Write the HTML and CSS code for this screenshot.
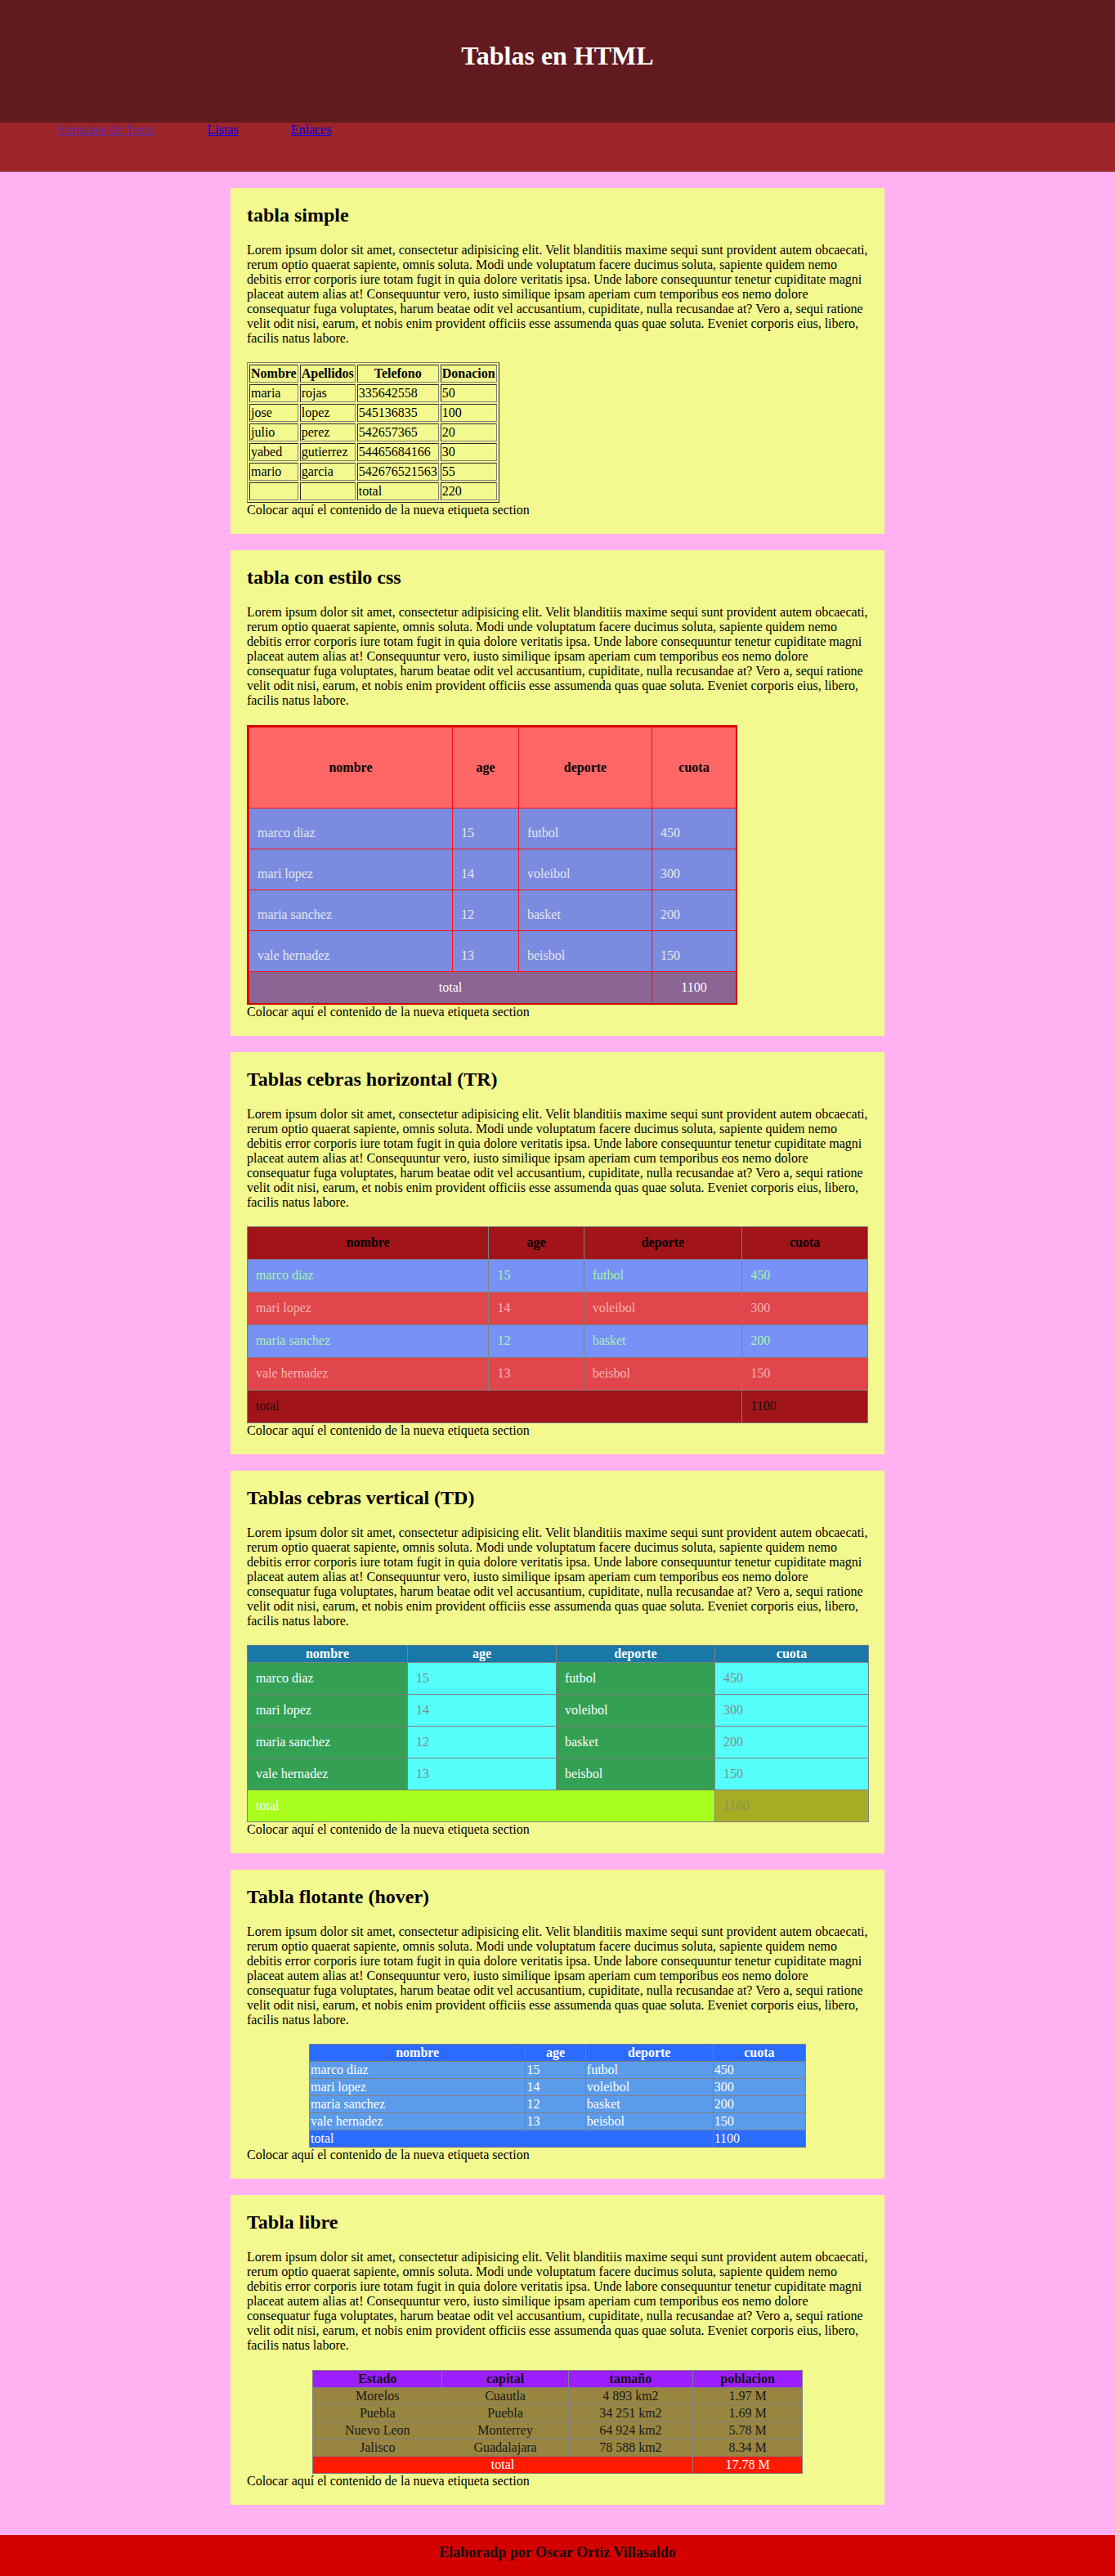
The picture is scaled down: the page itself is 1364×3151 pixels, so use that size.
FILE: index.html
```html
<!DOCTYPE html>
<html lang="es">
<head>
<meta charset="utf-8">
<title>Tablas en HTML</title>
<link rel="stylesheet" href="styles.css">
</head>
<body>
<header class="top">
  <h1 class="title">Tablas en HTML</h1>
</header>
<nav class="menu">
  <ul class="menu-list">
    <li class="menu-item"><a class="menu-link visited" href="#">Formatos de Texto</a></li>
    <li class="menu-item"><a class="menu-link" href="#">Listas</a></li>
    <li class="menu-item"><a class="menu-link" href="#">Enlaces</a></li>
  </ul>
</nav>
<main class="content">
  <section class="card">
    <h2 class="card-title">tabla simple</h2>
    <p class="lorem">Lorem ipsum dolor sit amet, consectetur adipisicing elit. Velit blanditiis maxime sequi sunt provident autem obcaecati, rerum optio quaerat sapiente, omnis soluta. Modi unde voluptatum facere ducimus soluta, sapiente quidem nemo debitis error corporis iure totam fugit in quia dolore veritatis ipsa. Unde labore consequuntur tenetur cupiditate magni placeat autem alias at! Consequuntur vero, iusto similique ipsam aperiam cum temporibus eos nemo dolore consequatur fuga voluptates, harum beatae odit vel accusantium, cupiditate, nulla recusandae at? Vero a, sequi ratione velit odit nisi, earum, et nobis enim provident officiis esse assumenda quas quae soluta. Eveniet corporis eius, libero, facilis natus labore.</p>
    <table class="t-simple">
      <tr><th>Nombre</th><th>Apellidos</th><th>Telefono</th><th>Donacion</th></tr>
      <tr><td>maria</td><td>rojas</td><td>335642558</td><td>50</td></tr>
      <tr><td>jose</td><td>lopez</td><td>545136835</td><td>100</td></tr>
      <tr><td>julio</td><td>perez</td><td>542657365</td><td>20</td></tr>
      <tr><td>yabed</td><td>gutierrez</td><td>54465684166</td><td>30</td></tr>
      <tr><td>mario</td><td>garcia</td><td>542676521563</td><td>55</td></tr>
      <tr><td></td><td></td><td>total</td><td>220</td></tr>
    </table>
    <div class="note">Colocar aquí el contenido de la nueva etiqueta section</div>
  </section>

  <section class="card">
    <h2 class="card-title">tabla con estilo css</h2>
    <p class="lorem">Lorem ipsum dolor sit amet, consectetur adipisicing elit. Velit blanditiis maxime sequi sunt provident autem obcaecati, rerum optio quaerat sapiente, omnis soluta. Modi unde voluptatum facere ducimus soluta, sapiente quidem nemo debitis error corporis iure totam fugit in quia dolore veritatis ipsa. Unde labore consequuntur tenetur cupiditate magni placeat autem alias at! Consequuntur vero, iusto similique ipsam aperiam cum temporibus eos nemo dolore consequatur fuga voluptates, harum beatae odit vel accusantium, cupiditate, nulla recusandae at? Vero a, sequi ratione velit odit nisi, earum, et nobis enim provident officiis esse assumenda quas quae soluta. Eveniet corporis eius, libero, facilis natus labore.</p>
    <table class="t-css">
      <colgroup><col class="c1"><col class="c2"><col class="c3"><col class="c4"></colgroup>
      <tr><th>nombre</th><th>age</th><th>deporte</th><th>cuota</th></tr>
      <tr><td>marco diaz</td><td>15</td><td>futbol</td><td>450</td></tr>
      <tr><td>mari lopez</td><td>14</td><td>voleibol</td><td>300</td></tr>
      <tr><td>maria sanchez</td><td>12</td><td>basket</td><td>200</td></tr>
      <tr><td>vale hernadez</td><td>13</td><td>beisbol</td><td>150</td></tr>
      <tr class="total"><td colspan="3">total</td><td>1100</td></tr>
    </table>
    <div class="note">Colocar aquí el contenido de la nueva etiqueta section</div>
  </section>

  <section class="card">
    <h2 class="card-title">Tablas cebras horizontal (TR)</h2>
    <p class="lorem">Lorem ipsum dolor sit amet, consectetur adipisicing elit. Velit blanditiis maxime sequi sunt provident autem obcaecati, rerum optio quaerat sapiente, omnis soluta. Modi unde voluptatum facere ducimus soluta, sapiente quidem nemo debitis error corporis iure totam fugit in quia dolore veritatis ipsa. Unde labore consequuntur tenetur cupiditate magni placeat autem alias at! Consequuntur vero, iusto similique ipsam aperiam cum temporibus eos nemo dolore consequatur fuga voluptates, harum beatae odit vel accusantium, cupiditate, nulla recusandae at? Vero a, sequi ratione velit odit nisi, earum, et nobis enim provident officiis esse assumenda quas quae soluta. Eveniet corporis eius, libero, facilis natus labore.</p>
    <table class="t-tr">
      <tr class="head"><th>nombre</th><th>age</th><th>deporte</th><th>cuota</th></tr>
      <tr class="odd"><td>marco diaz</td><td>15</td><td>futbol</td><td>450</td></tr>
      <tr class="even"><td>mari lopez</td><td>14</td><td>voleibol</td><td>300</td></tr>
      <tr class="odd"><td>maria sanchez</td><td>12</td><td>basket</td><td>200</td></tr>
      <tr class="even"><td>vale hernadez</td><td>13</td><td>beisbol</td><td>150</td></tr>
      <tr class="total"><td colspan="3">total</td><td>1100</td></tr>
    </table>
    <div class="note">Colocar aquí el contenido de la nueva etiqueta section</div>
  </section>

  <section class="card">
    <h2 class="card-title">Tablas cebras vertical (TD)</h2>
    <p class="lorem">Lorem ipsum dolor sit amet, consectetur adipisicing elit. Velit blanditiis maxime sequi sunt provident autem obcaecati, rerum optio quaerat sapiente, omnis soluta. Modi unde voluptatum facere ducimus soluta, sapiente quidem nemo debitis error corporis iure totam fugit in quia dolore veritatis ipsa. Unde labore consequuntur tenetur cupiditate magni placeat autem alias at! Consequuntur vero, iusto similique ipsam aperiam cum temporibus eos nemo dolore consequatur fuga voluptates, harum beatae odit vel accusantium, cupiditate, nulla recusandae at? Vero a, sequi ratione velit odit nisi, earum, et nobis enim provident officiis esse assumenda quas quae soluta. Eveniet corporis eius, libero, facilis natus labore.</p>
    <table class="t-td">
      <colgroup><col class="c1"><col class="c2"><col class="c3"><col class="c4"></colgroup>
      <tr><th>nombre</th><th>age</th><th>deporte</th><th>cuota</th></tr>
      <tr><td class="g">marco diaz</td><td class="cy">15</td><td class="g">futbol</td><td class="cy">450</td></tr>
      <tr><td class="g">mari lopez</td><td class="cy">14</td><td class="g">voleibol</td><td class="cy">300</td></tr>
      <tr><td class="g">maria sanchez</td><td class="cy">12</td><td class="g">basket</td><td class="cy">200</td></tr>
      <tr><td class="g">vale hernadez</td><td class="cy">13</td><td class="g">beisbol</td><td class="cy">150</td></tr>
      <tr><td class="lime" colspan="3">total</td><td class="olive">1100</td></tr>
    </table>
    <div class="note">Colocar aquí el contenido de la nueva etiqueta section</div>
  </section>

  <section class="card">
    <h2 class="card-title">Tabla flotante (hover)</h2>
    <p class="lorem">Lorem ipsum dolor sit amet, consectetur adipisicing elit. Velit blanditiis maxime sequi sunt provident autem obcaecati, rerum optio quaerat sapiente, omnis soluta. Modi unde voluptatum facere ducimus soluta, sapiente quidem nemo debitis error corporis iure totam fugit in quia dolore veritatis ipsa. Unde labore consequuntur tenetur cupiditate magni placeat autem alias at! Consequuntur vero, iusto similique ipsam aperiam cum temporibus eos nemo dolore consequatur fuga voluptates, harum beatae odit vel accusantium, cupiditate, nulla recusandae at? Vero a, sequi ratione velit odit nisi, earum, et nobis enim provident officiis esse assumenda quas quae soluta. Eveniet corporis eius, libero, facilis natus labore.</p>
    <table class="t-hover">
      <tr class="head"><th>nombre</th><th>age</th><th>deporte</th><th>cuota</th></tr>
      <tr class="row"><td>marco diaz</td><td>15</td><td>futbol</td><td>450</td></tr>
      <tr class="row"><td>mari lopez</td><td>14</td><td>voleibol</td><td>300</td></tr>
      <tr class="row"><td>maria sanchez</td><td>12</td><td>basket</td><td>200</td></tr>
      <tr class="row"><td>vale hernadez</td><td>13</td><td>beisbol</td><td>150</td></tr>
      <tr class="head"><td colspan="3">total</td><td>1100</td></tr>
    </table>
    <div class="note">Colocar aquí el contenido de la nueva etiqueta section</div>
  </section>

  <section class="card">
    <h2 class="card-title">Tabla libre</h2>
    <p class="lorem">Lorem ipsum dolor sit amet, consectetur adipisicing elit. Velit blanditiis maxime sequi sunt provident autem obcaecati, rerum optio quaerat sapiente, omnis soluta. Modi unde voluptatum facere ducimus soluta, sapiente quidem nemo debitis error corporis iure totam fugit in quia dolore veritatis ipsa. Unde labore consequuntur tenetur cupiditate magni placeat autem alias at! Consequuntur vero, iusto similique ipsam aperiam cum temporibus eos nemo dolore consequatur fuga voluptates, harum beatae odit vel accusantium, cupiditate, nulla recusandae at? Vero a, sequi ratione velit odit nisi, earum, et nobis enim provident officiis esse assumenda quas quae soluta. Eveniet corporis eius, libero, facilis natus labore.</p>
    <table class="t-free">
      <tr class="head"><th>Estado</th><th>capital</th><th>tamaño</th><th>poblacion</th></tr>
      <tr class="row"><td>Morelos</td><td>Cuautla</td><td>4 893 km2</td><td>1.97 M</td></tr>
      <tr class="row"><td>Puebla</td><td>Puebla</td><td>34 251 km2</td><td>1.69 M</td></tr>
      <tr class="row"><td>Nuevo Leon</td><td>Monterrey</td><td>64 924 km2</td><td>5.78 M</td></tr>
      <tr class="row"><td>Jalisco</td><td>Guadalajara</td><td>78 588 km2</td><td>8.34 M</td></tr>
      <tr class="total"><td colspan="3">total</td><td>17.78 M</td></tr>
    </table>
    <div class="note">Colocar aquí el contenido de la nueva etiqueta section</div>
  </section>
</main>
<footer class="foot">
  <p class="foot-text">Elaboradp por Oscar Ortiz Villasaldo</p>
</footer>
</body>
</html>
```
FILE: styles.css
```css
html, body {
  margin: 0;
  padding: 0;
}
body {
  background: #FFB1F1;
  font-family: "Liberation Serif", "Times New Roman", serif;
  font-size: 16px;
  color: #000;
}

/* header */
.top {
  background: #611B1F;
  height: 150px;
  box-sizing: border-box;
  padding-top: 50px;
}
.title {
  margin: 0;
  text-align: center;
  color: #fff;
  font-size: 32px;
  font-weight: bold;
}

/* nav */
.menu {
  background: #9D2428;
  height: 60px;
}
.menu-list {
  margin: 0;
  padding: 0 0 0 40px;
  list-style: none;
}
.menu-item {
  display: inline;
  padding: 0 30px;
}
.menu-link {
  color: #0000EE;
  text-decoration: underline;
}
.menu-link.visited {
  color: #5B2AA6;
}

/* sections */
.content {
  display: block;
}
.card {
  width: 760px;
  margin: 20px auto;
  padding: 20px;
  background: #F3F98F;
}
.card-title {
  margin: 0 0 19.92px;
  font-size: 24px;
  font-weight: bold;
}
.lorem {
  margin: 0 0 20.4px;
}
.note {
  margin: 0;
}

/* table 1: simple */
.t-simple {
  border: 1px outset #808080;
  border-spacing: 2px;
}
.t-simple th,
.t-simple td {
  border: 1px inset #808080;
  padding: 1px;
}

/* table 2: estilo css */
.t-css {
  width: 600px;
  table-layout: fixed;
  border: 2px solid #CC0000;
  border-collapse: separate;
  border-spacing: 0;
  background: #7B8CE0;
}
.t-css .c1 { width: 250px; }
.t-css .c2 { width: 81px; }
.t-css .c3 { width: 163px; }
.t-css .c4 { width: 102px; }
.t-css th,
.t-css td {
  border-right: 1px solid #FF1010;
  border-bottom: 1px solid #FF1010;
}
.t-css tr > :first-child {
  border-left: 1px solid #FF1010;
}
.t-css tr:first-child > * {
  border-top: 1px solid #FF1010;
}
.t-css tr:last-child > * {
  border-bottom: 0;
}
.t-css tr > :last-child {
  border-right: 0;
}
.t-css th {
  background: #FF6666;
  padding: 40px 10px;
  color: #000;
}
.t-css td {
  padding: 21px 10px 10px;
  color: #E6E6EE;
}
.t-css .total td {
  background: #8B6594;
  color: #fff;
  text-align: center;
  padding: 10px;
}

/* table 3: cebra horizontal */
.t-tr {
  width: 100%;
  border-collapse: collapse;
  border: 1px solid #808080;
}
.t-tr th,
.t-tr td {
  border: 1px solid #808080;
  padding: 10px 10px 11px;
}
.t-tr td {
  text-align: left;
}
.t-tr .head {
  background: #A11419;
  color: #000;
}
.t-tr .odd {
  background: #7791F6;
  color: #A8F5A8;
}
.t-tr .even {
  background: #E0464B;
  color: #FFB4B4;
}
.t-tr .total {
  background: #A11419;
  color: #111;
}

/* table 4: cebra vertical */
.t-td {
  width: 100%;
  table-layout: fixed;
  border-collapse: collapse;
  border: 1px solid #808080;
}
.t-td .c1 { width: 196px; }
.t-td .c2 { width: 182px; }
.t-td .c3 { width: 194px; }
.t-td .c4 { width: 188px; }
.t-td th {
  background: #1878A8;
  color: #fff;
  border: 1px solid #808080;
  padding: 1px;
}
.t-td td {
  border: 1px solid #808080;
  padding: 10px;
}
.t-td .g {
  background: #33A054;
  color: #fff;
}
.t-td .cy {
  background: #55FFFB;
  color: #8A8A8A;
}
.t-td .lime {
  background: #A8FF1E;
  color: #fff;
}
.t-td .olive {
  background: #A6AD24;
  color: #8E8E60;
}

/* table 5: hover */
.t-hover {
  width: 80%;
  margin: 0 auto;
  border-collapse: collapse;
  border: 1px solid #808080;
  color: #fff;
}
.t-hover th,
.t-hover td {
  border: 1px solid #808080;
  padding: 1px;
}
.t-hover td {
  text-align: left;
}
.t-hover .head {
  background: #2B6BFF;
}
.t-hover .row {
  background: #5B9BEB;
}
.t-hover .row:hover {
  background: #2B6BFF;
}

/* table 6: libre */
.t-free {
  width: 600px;
  margin: 0 auto;
  border-collapse: collapse;
  border: 1px solid #808080;
  text-align: center;
}
.t-free th,
.t-free td {
  border: 1px solid #808080;
  padding: 1px;
}
.t-free .head {
  background: #9B1FFF;
  color: #111;
}
.t-free .row {
  background: #978540;
  color: #1A1A1A;
}
.t-free .total {
  background: #FF1A00;
  color: #fff;
}

/* footer */
.foot {
  margin-top: 37px;
  height: 50px;
  box-sizing: border-box;
  padding-top: 11px;
  background: #D40000;
}
.foot-text {
  margin: 0;
  text-align: center;
  font-size: 18px;
  font-weight: bold;
  color: #111;
}
```
